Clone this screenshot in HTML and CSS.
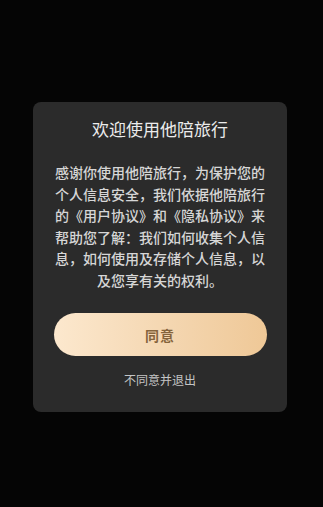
FILE: index.html
```html
<!DOCTYPE html>
<html lang="zh">
<head>
<meta charset="utf-8">
<link rel="stylesheet" href="styles.css">
</head>
<body>
<div class="screen">
  <div class="dialog">
    <h1 class="title">欢迎使用他陪旅行</h1>
    <p class="body">感谢你使用他陪旅行，为保护您的个人信息安全，我们依据他陪旅行的《用户协议》和《隐私协议》来帮助您了解：我们如何收集个人信息，如何使用及存储个人信息，以及您享有关的权利。</p>
    <button class="agree">同意</button>
    <div class="reject">不同意并退出</div>
  </div>
</div>
</body>
</html>
```
FILE: styles.css
```css
html, body {
  margin: 0;
  padding: 0;
  background: #050505;
}
.screen {
  width: 323px;
  height: 507px;
  display: flex;
  justify-content: center;
  padding-top: 102px;
  box-sizing: border-box;
  font-family: "Noto Sans CJK SC", "Noto Sans", sans-serif;
}
.dialog {
  width: 254px;
  height: 310px;
  margin-left: -3px;
  background: #2b2b2b;
  border-radius: 8px;
  box-sizing: border-box;
  padding: 16px 22px 0;
  display: flex;
  flex-direction: column;
  align-items: center;
}
.title {
  margin: 0;
  font-size: 17px;
  font-weight: 400;
  color: #ececec;
  line-height: 22px;
}
.body {
  margin: 22px 0 0;
  width: 210px;
  font-size: 14px;
  font-weight: 500;
  line-height: 21.5px;
  color: #d6d6d6;
  text-align: center;
}
.agree {
  margin-top: 22px;
  width: 213px;
  height: 43px;
  border: none;
  border-radius: 22px;
  background: linear-gradient(90deg, #fce8ce 0%, #f4d6b0 55%, #efc897 100%);
  color: #85643c;
  font-family: inherit;
  font-size: 14px;
  font-weight: 700;
  letter-spacing: 1px;
  padding: 0;
}
.reject {
  margin-top: 16px;
  font-size: 12px;
  color: #c4c4c4;
  line-height: 16px;
}
```
